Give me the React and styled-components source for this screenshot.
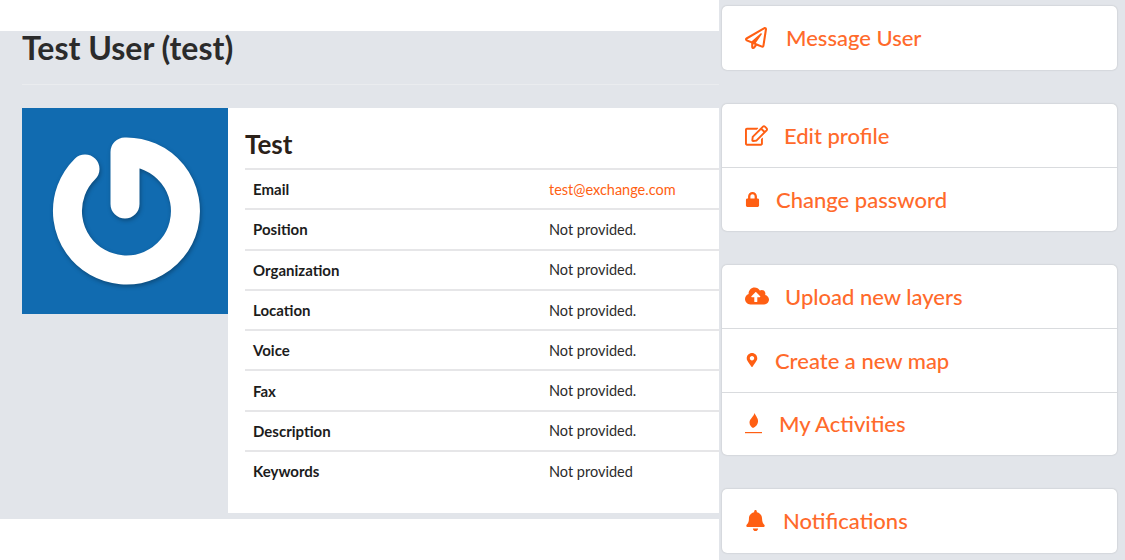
import React from 'react';
import styled, { createGlobalStyle } from 'styled-components';
import {
    FaRegPaperPlane,
    FaRegEdit,
    FaLock,
    FaCloudUploadAlt,
    FaMapMarkerAlt,
    FaBell,
} from 'react-icons/fa';

const fields = [
    ['Email', 'test@exchange.com', true],
    ['Position', 'Not provided.'],
    ['Organization', 'Not provided.'],
    ['Location', 'Not provided.'],
    ['Voice', 'Not provided.'],
    ['Fax', 'Not provided.'],
    ['Description', 'Not provided.'],
    ['Keywords', 'Not provided'],
];

function Logo() {
    return (
        <LogoSvg viewBox="0 0 206 206">
            <path
                d="M63 61 A59 59 0 1 0 103 44 L103 96"
                fill="none"
                stroke="#fff"
                strokeWidth="29"
                strokeLinecap="round"
                strokeLinejoin="round"
            />
        </LogoSvg>
    );
}

function FireIcon() {
    return (
        <svg width="17" height="22" viewBox="0 0 17 22">
            <path d="M9.5 0C10.5 3 13.5 5 13 9c-.4 3-2.5 5-5 6-1.5-1-3.5-2.5-3.5-5.500C4.500 6 8.500 4 9.500 0z" fill="#ff5f13" />
            <rect x="0" y="19" width="17" height="1.200" fill="#ff5f13" />
        </svg>
    );
}

export default function App() {
    return (
        <Page>
            <GlobalStyle />
            <Left>
                <TopBar />
                <Main>
                    <Title>Test User (test)</Title>
                    <Profile>
                        <Avatar><Logo /></Avatar>
                        <Panel>
                            <Name>Test</Name>
                            {fields.map(([label, value, link]) => (
                                <Row key={label}>
                                    <Label>{label}</Label>
                                    <Value $link={link}>{value}</Value>
                                </Row>
                            ))}
                        </Panel>
                    </Profile>
                </Main>
            </Left>
            <Side>
                <Card>
                    <Item $gap={19}><FaRegPaperPlane size={22} />Message User</Item>
                </Card>
                <Card>
                    <Item $gap={16}><FaRegEdit size={23} />Edit profile</Item>
                    <Item $gap={16}><FaLock size={15} />Change password</Item>
                </Card>
                <Card>
                    <Item $gap={16}><FaCloudUploadAlt size={24} />Upload new layers</Item>
                    <Item $gap={16}><FaMapMarkerAlt size={14} />Create a new map</Item>
                    <Item $gap={17}><FireIcon />My Activities</Item>
                </Card>
                <Card>
                    <Item $gap={17}><FaBell size={21} />Notifications</Item>
                </Card>
            </Side>
        </Page>
    );
}

const GlobalStyle = createGlobalStyle`
    html, body {
        margin: 0;
        padding: 0;
        background: #fff;
    }

    * {
        box-sizing: border-box;
    }
`;

const Page = styled.div`
    display: grid;
    grid-template-columns: 719px 406px;
    width: 1125px;
    height: 560px;
    overflow: hidden;
    font-family: Lato, "Liberation Sans", sans-serif;
`;

const Left = styled.div`
    background: #fff;
`;

const TopBar = styled.div`
    height: 31px;
    background: #fff;
`;

const Main = styled.div`
    height: 488px;
    padding: 0 0 0 22px;
    background: #e2e5ea;
    overflow: hidden;
`;

const Title = styled.h1`
    margin: 0 0 23px;
    height: 54px;
    border-bottom: 1px solid #eaecef;
    font-size: 32px;
    line-height: 34px;
    font-weight: 700;
    color: #2b2b2b;
`;

const Profile = styled.div`
    display: flex;
    align-items: flex-start;
`;

const Avatar = styled.div`
    width: 206px;
    height: 206px;
    flex: none;
    background: #116bb0;
`;

const LogoSvg = styled.svg`
    display: block;
    width: 206px;
    height: 206px;
    filter: drop-shadow(1px 2px 2px rgba(0, 0, 0, 0.3));
`;

const Panel = styled.div`
    flex: 1;
    height: 405px;
    padding: 0 0 0 17px;
    background: #fff;
`;

const Name = styled.h2`
    margin: 0;
    height: 60px;
    padding-top: 20px;
    font-size: 26px;
    line-height: 32px;
    font-weight: 700;
    color: #2b2119;
`;

const Row = styled.div`
    display: grid;
    grid-template-columns: 296px 1fr;
    align-items: center;
    height: 40.3px;
    padding: 0 0 0 8px;
    border-top: 2px solid #e6e6e8;
`;

const Label = styled.span`
    font-size: 15px;
    font-weight: 700;
    color: #1c1c1c;
`;

const Value = styled.span`
    font-size: 14.5px;
    color: ${({ $link }) => ($link ? '#ff5f13' : '#2b2b2b')};
`;

const Side = styled.div`
    display: flex;
    flex-direction: column;
    gap: 34px;
    padding: 6px 8px 0 3px;
    background: #e2e5ea;
`;

const Card = styled.div`
    border-radius: 5px;
    background: #fff;
    box-shadow: 0 0 2px rgba(0, 0, 0, 0.2);
    overflow: hidden;
`;

const Item = styled.div`
    display: flex;
    align-items: center;
    gap: ${({ $gap }) => $gap}px;
    height: 63.500px;
    padding: 0 0 0 23px;
    font-size: 22px;
    font-weight: 500;
    color: #ff6a2b;

    & + & {
        border-top: 1px solid #d9dbde;
    }

    svg {
        flex: none;
        color: #ff5f13;
    }
`;
